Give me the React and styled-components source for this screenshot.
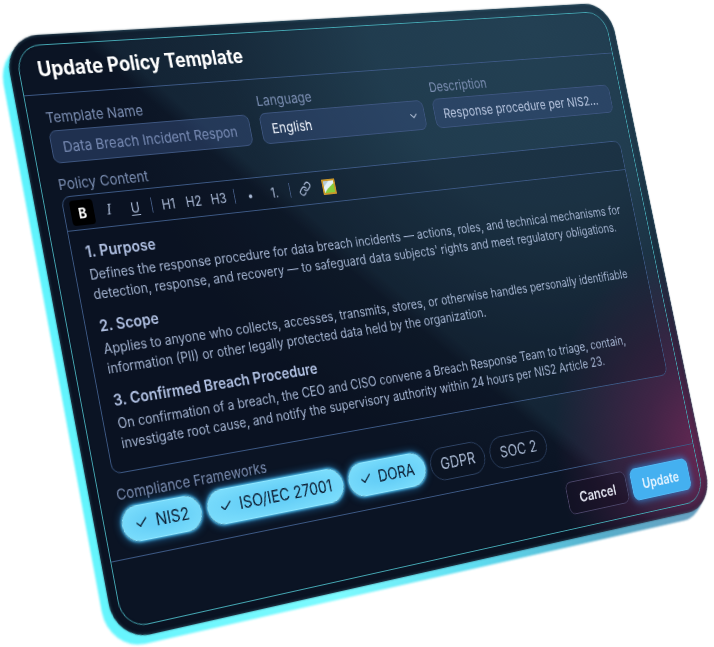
import React, { useState } from "react";
import styled, { createGlobalStyle, css } from "styled-components";
import { Check, ChevronDown, Link } from "lucide-react";

/* Plane of the dialog: the lit frame line is FRAME_W x FRAME_H and its four
   corners land on the CORNERS of the scene. */
const FRAME_W = 772;
const FRAME_H = 592;
const CORNERS = [
  [14, 46],
  [604, 11],
  [705, 500],
  [123, 630],
];

function project(w, h, [[x0, y0], [x1, y1], [x2, y2], [x3, y3]]) {
  const dx1 = x1 - x2;
  const dx2 = x3 - x2;
  const dx3 = x0 - x1 + x2 - x3;
  const dy1 = y1 - y2;
  const dy2 = y3 - y2;
  const dy3 = y0 - y1 + y2 - y3;
  const den = dx1 * dy2 - dx2 * dy1;
  const g = (dx3 * dy2 - dx2 * dy3) / den;
  const k = (dx1 * dy3 - dx3 * dy1) / den;
  const m = [
    (x1 - x0 + g * x1) / w, (y1 - y0 + g * y1) / w, 0, g / w,
    (x3 - x0 + k * x3) / h, (y3 - y0 + k * y3) / h, 0, k / h,
    0, 0, 1, 0,
    x0, y0, 0, 1,
  ];
  return `matrix3d(${m.map((n) => n.toFixed(8)).join(",")})`;
}

const GlobalStyle = createGlobalStyle`
  *, *::before, *::after { box-sizing: border-box; }
  html, body { margin: 0; background: #fff; }
  body, button, input, select { font-family: Inter, "Liberation Sans", sans-serif; }
`;

const Scene = styled.main`
  min-height: 100vh;
  overflow: hidden;
`;

const Slab = styled.div`
  width: calc(100vw + 78px);
  transform-origin: 0 0;
  transform: ${project(FRAME_W, FRAME_H, CORNERS)} translate(-10px, -10px);
  position: relative;
  border-radius: 38px;

  &::before {
    content: "";
    position: absolute;
    inset: 8px 8px -8px -9px;
    border-radius: 40px;
    background: linear-gradient(100deg, #5df3fd 0%, #7dfbff 42%, #5fdcf0 62%, #58aecb 82%, #6a9fc0 100%);
    filter: blur(1px);
  }
`;

const Bezel = styled.div`
  position: relative;
  padding: 10px;
  border-radius: 38px;
  background:
    radial-gradient(ellipse 240px 250px at 103% 90%, rgba(116, 42, 90, 0.95), rgba(92, 36, 80, 0.6) 45%, transparent 100%),
    linear-gradient(45deg, transparent 49%, rgba(44, 84, 104, 0.22) 51%, rgba(44, 84, 104, 0.26) 100%),
    radial-gradient(ellipse 560px 520px at 84% 4%, #20394c 0%, #1d3547 40%, rgba(18, 32, 48, 0.6) 75%, transparent 100%),
    #0b1424;
  box-shadow:
    inset 0 0 3px 1px rgba(88, 150, 170, 0.35),
    inset 0 0 9px 4px rgba(3, 12, 22, 0.25),
    0 0 2px rgba(20, 50, 66, 0.7);
`;

const Dialog = styled.form`
  display: flex;
  flex-direction: column;
  border: 1px solid #44a6b2;
  border-radius: 28px;
  color: #a9bad8;
`;

const Header = styled.header`
  padding: 12px 20px;
  border-bottom: 1px solid #3c5884;
`;

const Title = styled.h1`
  margin: 0;
  font-size: 21px;
  line-height: 26px;
  font-weight: 700;
  color: #fff;
`;

const Body = styled.div`
  display: flex;
  flex-direction: column;
  padding: 14px 16px 14px 19px;
`;

const Fields = styled.div`
  display: grid;
  grid-template-columns: 235fr 214fr 259fr;
  gap: 13px;
  margin-bottom: 12px;
`;

const Field = styled.div`
  display: flex;
  flex-direction: column;
  gap: 3px;
  min-width: 0;
`;

const labelText = css`
  font-size: 15px;
  line-height: 20px;
  color: #7a8db1;
`;

const Label = styled.label`
  ${labelText}
`;

const boxLook = css`
  width: 100%;
  height: 34px;
  padding: 0 12px;
  border: 1px solid #3d557f;
  border-radius: 8px;
  background: rgba(52, 76, 122, 0.5);
  font-size: 15px;
  outline: none;
`;

const TextInput = styled.input`
  ${boxLook}
  color: ${(p) => (p.$dim ? "#788bb4" : "#b6c4de")};
`;

const SelectWrap = styled.div`
  display: grid;
  align-items: center;

  & > * { grid-area: 1 / 1; }
  & > svg { justify-self: end; margin-right: 8px; pointer-events: none; color: #c0cde2; }
`;

const Select = styled.select`
  ${boxLook}
  appearance: none;
  color: #eef3fb;
`;

const Editor = styled.section`
  margin: 2px 0 11px;
  border: 1px solid #3c5884;
  border-radius: 10px;
  background: rgba(8, 14, 28, 0.22);
`;

const Toolbar = styled.div`
  display: flex;
  align-items: center;
  gap: 4px;
  height: 35px;
  padding: 0 7px;
  border-bottom: 1px solid #3c5884;
`;

const Tool = styled.button`
  display: grid;
  place-items: center;
  width: 26px;
  height: 26px;
  padding: 0;
  border: 0;
  border-radius: 4px;
  background: ${(p) => (p.$on ? "#000" : "transparent")};
  color: ${(p) => (p.$on ? "#fff" : "#a8b8d4")};
  font-size: ${(p) => (p.$serif ? 16 : 14)}px;
  font-weight: ${(p) => (p.$on ? 700 : 400)};
  font-family: ${(p) => (p.$serif ? '"Liberation Serif", serif' : "inherit")};
  font-style: ${(p) => (p.$serif ? "italic" : "normal")};
  text-decoration: ${(p) => (p.$under ? "underline" : "none")};
  text-underline-offset: 2px;
`;

const Divider = styled.span`
  width: 1px;
  height: 16px;
  margin: 0 2px;
  background: #435a82;
`;

const Content = styled.div`
  display: flex;
  flex-direction: column;
  gap: 12px;
  padding: 12px 15px 18px;
  outline: none;
`;

const SectionTitle = styled.h2`
  margin: 0 0 4px;
  font-size: 16px;
  line-height: 20px;
  font-weight: 600;
  color: #b0c0e2;
`;

const Paragraph = styled.p`
  margin: 0;
  font-size: 14px;
  line-height: 20px;
  color: #a3b3d0;
`;

const Frameworks = styled.fieldset`
  margin: 0;
  padding: 0;
  border: 0;
  min-width: 0;
`;

const Legend = styled.legend`
  ${labelText}
  padding: 0 0 3px;
`;

const Pills = styled.div`
  display: flex;
  gap: 7px;
`;

const Pill = styled.label`
  display: flex;
  align-items: center;
  gap: 8px;
  height: 36px;
  padding: 0 13px;
  border-radius: 18px;
  font-size: 17px;
  white-space: nowrap;
  border: 1px solid ${(p) => (p.$on ? "#8fe6ff" : "#2f4466")};
  background: ${(p) => (p.$on ? "radial-gradient(ellipse at center, #66cff7 30%, #7fe0fd 100%)" : "rgba(12, 19, 34, 0.5)")};
  color: ${(p) => (p.$on ? "#0b1c30" : "#a8b8d2")};
  box-shadow: ${(p) => (p.$on ? "0 0 3px 1px #4fc4f5, 0 0 9px 1px rgba(40, 150, 220, 0.75)" : "none")};

  & > input { position: absolute; opacity: 0; margin: 0; }
`;

const Footer = styled.footer`
  display: flex;
  justify-content: flex-end;
  gap: 7px;
  padding: 14px 15px 15px 19px;
  border-top: 1px solid #3c5884;
`;

const Button = styled.button`
  height: 37px;
  min-width: 88px;
  padding: 0 15px;
  border-radius: 8px;
  font-size: 16px;
  font-weight: 600;
  border: 1px solid ${(p) => (p.$primary ? "#52b8f4" : "#4a4468")};
  background: ${(p) => (p.$primary ? "#44b0f0" : "rgba(24, 16, 36, 0.45)")};
  color: ${(p) => (p.$primary ? "#e6f4ff" : "#e2e4f0")};
  box-shadow: ${(p) => (p.$primary ? "0 0 9px 1px rgba(50, 150, 235, 0.8)" : "none")};
`;

function PictureIcon() {
  return (
    <svg width="17" height="17" viewBox="0 0 17 17" aria-hidden="true">
      <rect x="1" y="1" width="15" height="15" fill="#e4f2f8" stroke="#c9972a" strokeWidth="2" />
      <path d="M2 15L6 11L15 5V15Z" fill="#86cc3c" />
      <path d="M2 2H9L2 8Z" fill="#b4ccd8" />
    </svg>
  );
}

const SECTIONS = [
  ["1. Purpose", "Defines the response procedure for data breach incidents — actions, roles, and technical mechanisms for detection, response, and recovery — to safeguard data subjects' rights and meet regulatory obligations."],
  ["2. Scope", "Applies to anyone who collects, accesses, transmits, stores, or otherwise handles personally identifiable information (PII) or other legally protected data held by the organization."],
  ["3. Confirmed Breach Procedure", "On confirmation of a breach, the CEO and CISO convene a Breach Response Team to triage, contain, investigate root cause, and notify the supervisory authority within 24 hours per NIS2 Article 23."],
];

const FRAMEWORKS = ["NIS2", "ISO/IEC 27001", "DORA", "GDPR", "SOC 2"];

export default function App() {
  const [chosen, setChosen] = useState(["NIS2", "ISO/IEC 27001", "DORA"]);
  const toggle = (name) =>
    setChosen((list) => (list.includes(name) ? list.filter((n) => n !== name) : [...list, name]));

  return (
    <Scene>
      <GlobalStyle />
      <Slab>
        <Bezel>
          <Dialog role="dialog" aria-labelledby="title" onSubmit={(e) => e.preventDefault()}>
            <Header>
              <Title id="title">Update Policy Template</Title>
            </Header>
            <Body>
              <Fields>
                <Field>
                  <Label htmlFor="name">Template Name</Label>
                  <TextInput id="name" $dim defaultValue="Data Breach Incident Respon" />
                </Field>
                <Field>
                  <Label htmlFor="language">Language</Label>
                  <SelectWrap>
                    <Select id="language" defaultValue="English">
                      <option>English</option>
                    </Select>
                    <ChevronDown size={15} strokeWidth={2} />
                  </SelectWrap>
                </Field>
                <Field>
                  <Label htmlFor="description">Description</Label>
                  <TextInput id="description" defaultValue="Response procedure per NIS2..." />
                </Field>
              </Fields>
              <Label as="div" id="content-label">Policy Content</Label>
              <Editor>
                <Toolbar role="toolbar" aria-label="Formatting">
                  <Tool type="button" $on>B</Tool>
                  <Tool type="button" $serif>I</Tool>
                  <Tool type="button" $under>U</Tool>
                  <Divider />
                  <Tool type="button">H1</Tool>
                  <Tool type="button">H2</Tool>
                  <Tool type="button">H3</Tool>
                  <Divider />
                  <Tool type="button">•</Tool>
                  <Tool type="button">1.</Tool>
                  <Divider />
                  <Tool type="button" aria-label="Link"><Link size={16} strokeWidth={2} /></Tool>
                  <Tool type="button" aria-label="Image"><PictureIcon /></Tool>
                </Toolbar>
                <Content
                  role="textbox"
                  aria-multiline="true"
                  aria-labelledby="content-label"
                  contentEditable
                  suppressContentEditableWarning
                  spellCheck={false}
                >
                  {SECTIONS.map(([title, text]) => (
                    <div key={title}>
                      <SectionTitle>{title}</SectionTitle>
                      <Paragraph>{text}</Paragraph>
                    </div>
                  ))}
                </Content>
              </Editor>
              <Frameworks>
                <Legend>Compliance Frameworks</Legend>
                <Pills>
                  {FRAMEWORKS.map((name) => {
                    const on = chosen.includes(name);
                    return (
                      <Pill key={name} $on={on}>
                        <input type="checkbox" checked={on} onChange={() => toggle(name)} />
                        {on && <Check size={16} strokeWidth={2} />}
                        {name}
                      </Pill>
                    );
                  })}
                </Pills>
              </Frameworks>
            </Body>
            <Footer>
              <Button type="button">Cancel</Button>
              <Button type="submit" $primary>Update</Button>
            </Footer>
          </Dialog>
        </Bezel>
      </Slab>
    </Scene>
  );
}
